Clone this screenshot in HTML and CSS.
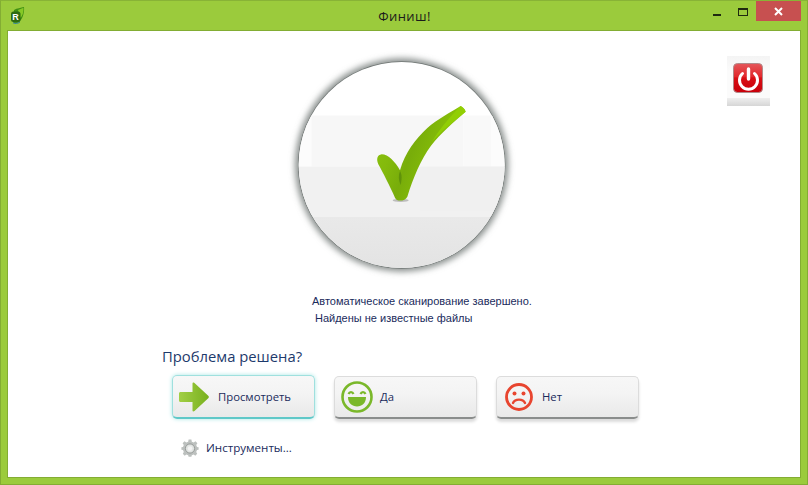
FILE: index.html
```html
<!DOCTYPE html>
<html lang="ru">
<head>
<meta charset="utf-8">
<title>Финиш!</title>
<link rel="stylesheet" href="styles.css">
</head>
<body>
<div class="window">
  <header class="titlebar">
    <svg class="logo" width="16" height="18" viewBox="0 0 16 18">
      <path d="M4 3 C7 1 11 1 14 0 C14.500 5 13 11 10 14 C8 16.500 5 16.500 3 15.500 Z" fill="#3f8f12"/>
      <path d="M8 3 L13.500 .8 C13.800 5 12.500 9 10.500 11 Z" fill="#86c926"/>
      <path d="M3 15.800 C5 17 8 16.500 10 15" fill="none" stroke="#2e7fa5" stroke-width="1"/>
      <rect x="1" y="4.500" width="9.500" height="10.500" rx="2.500" fill="#2d6a10"/>
      <text x="2.300" y="13.300" class="logo-letter">R</text>
    </svg>
    <div class="title">Финиш!</div>
    <div class="controls">
      <span class="ctl ctl-min"><i class="min-glyph"></i></span>
      <span class="ctl ctl-max"><i class="max-glyph"></i></span>
      <span class="ctl ctl-close">
        <svg width="9" height="9" viewBox="0 0 9 9"><path d="M1 1 L8 8 M8 1 L1 8" stroke="#fff" stroke-width="2"/></svg>
      </span>
    </div>
  </header>
  <main class="content">
    <div class="power">
      <svg width="43" height="50" viewBox="0 0 43 50">
        <defs>
          <linearGradient id="tile" x1="0" y1="0" x2="0" y2="1">
            <stop offset="0" stop-color="#f4f4f4"/><stop offset=".3" stop-color="#fbfbfb"/><stop offset=".84" stop-color="#fbfbfb"/>
            <stop offset=".85" stop-color="#ededed"/><stop offset="1" stop-color="#d6d6d6"/>
          </linearGradient>
          <linearGradient id="red" x1="0" y1="0" x2="0" y2="1">
            <stop offset="0" stop-color="#e4575b"/><stop offset=".45" stop-color="#e2282c"/><stop offset=".5" stop-color="#d80e14"/><stop offset="1" stop-color="#c8000a"/>
          </linearGradient>
        </defs>
        <rect width="43" height="50" fill="url(#tile)"/>
        <rect x="6.500" y="7.500" width="29" height="29" rx="4" fill="url(#red)" stroke="#b08a8a" stroke-width="1"/>
        <path d="M15.500 17.500 A9 9 0 1 0 27.500 17.500" fill="none" stroke="#fff" stroke-width="3" stroke-linecap="round"/>
        <path d="M21.500 13 V23" stroke="#fff" stroke-width="3.400" stroke-linecap="round"/>
      </svg>
    </div>
    <svg class="dial" width="235" height="235" viewBox="0 0 705 705">
      <defs>
        <filter id="blur" x="-10%" y="-10%" width="120%" height="120%"><feGaussianBlur stdDeviation="9"/></filter>
        <clipPath id="disc"><circle cx="350" cy="360" r="309"/></clipPath>
        <linearGradient id="low" x1="0" y1="0" x2="0" y2="1">
          <stop offset="0" stop-color="#e9e9e9"/><stop offset="1" stop-color="#e2e2e2"/>
        </linearGradient>
        <linearGradient id="tick" x1="0" y1="0" x2="1" y2="0.400">
          <stop offset="0" stop-color="#8cc40e"/><stop offset=".3" stop-color="#84ba0c"/><stop offset=".5" stop-color="#78ad0a"/><stop offset=".8" stop-color="#88c008"/><stop offset="1" stop-color="#92ce06"/>
        </linearGradient>
      </defs>
      <circle cx="350" cy="360" r="320" fill="#8a908e" filter="url(#blur)"/>
      <circle cx="350" cy="360" r="311" fill="#6f7573"/>
      <g clip-path="url(#disc)">
        <rect x="0" y="0" width="705" height="705" fill="#fff"/>
        <rect x="0" y="212" width="705" height="153" fill="#fcfcfc"/>
        <rect x="80" y="212" width="455" height="153" fill="#f7f7f7"/>
        <rect x="535" y="212" width="83" height="153" fill="#f9f9f9"/>
        <rect x="0" y="365" width="705" height="150" fill="#f1f1f1"/>
        <rect x="405" y="365" width="300" height="135" fill="#f0f0f0"/>
        <rect x="0" y="515" width="705" height="190" fill="url(#low)"/>
      </g>
      <ellipse cx="347" cy="466" rx="24" ry="5" fill="#9a9a9a" opacity=".6"/>
      <path d="M527 183 C533 186 540 192 542 200 C505 232 468 264 438 302 C408 342 385 397 367 455 C360 469 335 471 330 458 C315 425 295 385 280 358 C273 342 277 330 290 328 C310 328 330 350 345 376 C360 322 392 282 427 249 C457 223 495 203 527 183 Z" fill="url(#tick)"/>
      <path d="M527 183 C533 186 540 192 542 200 C505 230 470 256 440 292 C465 250 495 215 527 183 Z" fill="#94d204" opacity=".8"/>
      <path d="M345 378 C352 390 350 405 347 420 C340 405 340 390 345 378 Z" fill="#4f7f0a" opacity=".6"/>
    </svg>
    <div class="status">
      <p class="line">Автоматическое сканирование завершено.</p>
      <p class="line line-2">Найдены не известные файлы</p>
    </div>
    <section class="question">
      <h2 class="prompt">Проблема решена?</h2>
      <div class="actions">
        <button class="action action-active" type="button">
          <span class="slot slot-arrow">
            <svg width="30" height="30" viewBox="0 0 30 30">
              <defs><linearGradient id="arrow" x1="0" y1="0" x2="1" y2="0"><stop offset="0" stop-color="#a2cf45"/><stop offset="1" stop-color="#78b01e"/></linearGradient></defs>
              <path d="M1.500 10 H13.500 V1.500 C13.500 .5 14.500 .2 15.500 1 L29.500 14 C30 14.700 30 15.300 29.500 16 L15.500 29 C14.500 29.800 13.500 29.500 13.500 28.500 V20 H1.500 C.6 20 0 19.400 0 18.500 V11.500 C0 10.600 .6 10 1.500 10 Z" fill="url(#arrow)"/>
            </svg>
          </span>
          <span class="label">Просмотреть</span>
        </button>
        <button class="action" type="button">
          <span class="slot">
            <svg width="32" height="32" viewBox="0 0 32 32">
              <circle cx="16" cy="16" r="14.500" fill="none" stroke="#7ab82a" stroke-width="2.600"/>
              <path d="M7.500 13 C8.500 10.500 11.500 10.500 12.500 13 M19.500 13 C20.500 10.500 23.500 10.500 24.500 13" fill="none" stroke="#7ab82a" stroke-width="2.200"/>
              <path d="M7 16 H25 C25 22 21 25.500 16 25.500 C11 25.500 7 22 7 16 Z" fill="#7ab82a"/>
            </svg>
          </span>
          <span class="label">Да</span>
        </button>
        <button class="action" type="button">
          <span class="slot">
            <svg width="28" height="28" viewBox="0 0 28 28">
              <circle cx="14" cy="14" r="12.500" fill="none" stroke="#e8452f" stroke-width="2.800"/>
              <circle cx="9.500" cy="10.500" r="2" fill="#e8452f"/>
              <circle cx="18.500" cy="10.500" r="2" fill="#e8452f"/>
              <path d="M8 20 C10 15.500 18 15.500 20 20" fill="none" stroke="#e8452f" stroke-width="2.400" stroke-linecap="round"/>
            </svg>
          </span>
          <span class="label">Нет</span>
        </button>
      </div>
      <a class="tools">
        <svg width="18" height="18" viewBox="0 0 18 18">
          <path d="M7.600 .6 H10.400 L10.800 2.700 L12.700 3.500 L14.500 2.300 L16.400 4.200 L15.200 6 L16 7.900 L17.600 8.300 V10.700 L16 11.100 L15.200 13 L16.200 14.800 L14.300 16.700 L12.700 15.500 L10.800 16.300 L10.400 17.800 H7.600 L7.200 16.300 L5.300 15.500 L3.700 16.700 L1.800 14.800 L2.800 13 L2 11.100 L.4 10.700 V8.300 L2 7.900 L2.800 6 L1.600 4.200 L3.500 2.300 L5.300 3.500 L7.200 2.700 Z" fill="#bcc0be"/>
          <circle cx="9" cy="9.500" r="4.600" fill="#e2e5e3" stroke="#969a98" stroke-width="1"/>
          <circle cx="9" cy="9.500" r="2.200" fill="#f4f4f4"/>
        </svg>
        <span class="tools-label">Инструменты...</span>
      </a>
    </section>
  </main>
</div>
</body>
</html>
```
FILE: styles.css
```css
* { box-sizing: border-box; }
html, body { margin: 0; padding: 0; }
body { width: 808px; height: 485px; overflow: hidden; background: #9bcb3c; font-family: "Open Sans", sans-serif; }

.window {
  width: 808px;
  height: 485px;
  display: flex;
  flex-direction: column;
  background: #9bcb3c;
  border: 1px solid #83ad33;
  border-top-color: #88b336;
  padding: 0 6px 6px;
}

.titlebar {
  height: 29px;
  flex: none;
  position: relative;
  display: flex;
  align-items: flex-start;
  justify-content: center;
}
.logo { position: absolute; left: 3px; top: 6px; }
.logo-letter { font: bold 9px "Liberation Sans", sans-serif; fill: #fff; }
.title { font-size: 13px; line-height: 18px; margin-top: 6px; margin-left: 1px; color: #1b1b1b; letter-spacing: .4px; }

.controls { position: absolute; right: 0; top: 0; display: flex; }
.ctl { height: 20px; display: flex; align-items: center; justify-content: center; }
.ctl-min { width: 26px; }
.ctl-max { width: 26px; }
.ctl-close { width: 45px; background: #c75050; }
.min-glyph { width: 8px; height: 2px; background: #1f2a10; margin-top: 8px; }
.max-glyph { width: 10px; height: 8px; border: 1px solid #1f2a10; border-top-width: 2px; margin-top: 2px; }

.content {
  flex: 1;
  position: relative;
  background: #fff;
  border: 1px solid #83ad33;
  display: flex;
  flex-direction: column;
  align-items: flex-start;
}

.power { position: absolute; right: 30px; top: 25px; height: 50px; }

.dial { display: block; flex: none; margin: 14px 0 0 277px; }

.status { margin: 13px 0 0 304px; font-family: "Liberation Sans", sans-serif; font-size: 11px; line-height: 17px; color: #1a2b5c; }
.line { margin: 0; white-space: nowrap; }
.line-2 { padding-left: 3px; }

.question { margin: 19px 0 0 154px; }
.prompt { margin: 0; font-size: 14.800px; line-height: 20px; font-weight: 400; color: #1d3a6c; white-space: nowrap; }

.actions { display: flex; gap: 19px; margin: 10px 0 0 10px; }
.action {
  width: 143px;
  height: 43px;
  padding: 0;
  display: flex;
  align-items: center;
  border: 1px solid #dcdcdc;
  border-bottom: 2px solid #8a8d8c;
  border-radius: 5px;
  background: linear-gradient(#f7f7f7, #f4f4f4 40%, #e9e9e9);
  box-shadow: 0 3px 3px #dcdcdc;
  font-family: "Open Sans", sans-serif;
}
.action-active {
  height: 44px;
  border: 1px solid #9fe0de;
  border-bottom: 2px solid #5fc8c8;
  box-shadow: 0 0 4px #a8e6e4;
  margin-top: -1px;
}
.slot { width: 44px; margin-right: 1px; flex: none; display: flex; justify-content: center; align-items: center; }
.slot svg { display: block; }
.slot-arrow { padding-right: 2px; }
.label { font-size: 11.300px; line-height: 16px; color: #1a2b5c; }

.tools { display: flex; align-items: center; margin: 20px 0 0 19px; }
.tools-label { margin-left: 7px; font-size: 11.600px; line-height: 18px; color: #1a2b5c; }
```
